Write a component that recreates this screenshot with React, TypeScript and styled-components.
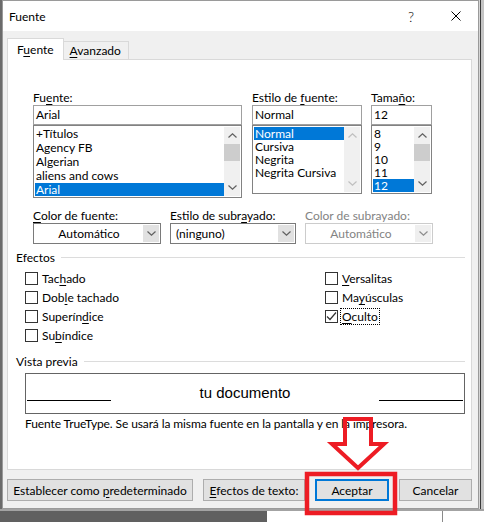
import styled, { createGlobalStyle } from 'styled-components';

const GlobalStyle = createGlobalStyle`
  html, body {
    margin: 0;
    padding: 0;
  }
  body {
    font-family: Lato, "Noto Sans", sans-serif;
    font-size: 12px;
    color: #000;
  }
`;

const fontFaces = ['+Títulos', 'Agency FB', 'Algerian', 'aliens and cows', 'Arial'];
const fontStyles = ['Normal', 'Cursiva', 'Negrita', 'Negrita Cursiva'];
const fontSizes = ['8', '9', '10', '11', '12'];

const Chevron = ({ dir, color }: { dir: 'up' | 'down'; color: string }) => (
  <svg width="9" height="5" viewBox="0 0 9 5">
    <polyline
      points={dir === 'up' ? '0.5,4.5 4.5,0.8 8.5,4.5' : '0.5,0.5 4.5,4.2 8.5,0.5'}
      fill="none"
      stroke={color}
      strokeWidth="1.2"
    />
  </svg>
);

const ScrollBar = ({ enabled }: { enabled: boolean }) => (
  <ScrollTrack>
    <ScrollArrow>
      <Chevron dir="up" color={enabled ? '#606060' : '#bfbfbf'} />
    </ScrollArrow>
    <ScrollRail>{enabled && <ScrollThumb />}</ScrollRail>
    <ScrollArrow>
      <Chevron dir="down" color={enabled ? '#606060' : '#bfbfbf'} />
    </ScrollArrow>
  </ScrollTrack>
);

const App = () => {
  return (
    <Page>
      <GlobalStyle />
      <Dialog>
        <TitleBar>
          <Title>Fuente</Title>
          <TitleButton $width={46}>
            <HelpGlyph>?</HelpGlyph>
          </TitleButton>
          <TitleButton $width={44}>
            <svg width="10" height="10" viewBox="0 0 10 10">
              <path d="M0.5 0.5 L9.5 9.5 M9.5 0.5 L0.5 9.5" stroke="#000" strokeWidth="1" />
            </svg>
          </TitleButton>
        </TitleBar>

        <Body>
          <TabStrip>
            <Tab $active>
              F<Key>u</Key>ente
            </Tab>
            <Tab>
              <Key>A</Key>vanzado
            </Tab>
          </TabStrip>

          <Panel>
            <Pickers>
              <PickerColumn $width={209}>
                <FieldLabel>
                  Fu<Key>e</Key>nte:
                </FieldLabel>
                <TextBox>Arial</TextBox>
                <ListBox $height={73}>
                  <Items>
                    {fontFaces.map((f) => (
                      <Item key={f} $row={14} $selected={f === 'Arial'}>
                        {f}
                      </Item>
                    ))}
                  </Items>
                  <ScrollBar enabled />
                </ListBox>
              </PickerColumn>

              <PickerColumn $width={110}>
                <FieldLabel>
                  Estilo de <Key>f</Key>uente:
                </FieldLabel>
                <TextBox>Normal</TextBox>
                <ListBox $height={69}>
                  <Items>
                    {fontStyles.map((s) => (
                      <Item key={s} $row={13} $selected={s === 'Normal'}>
                        {s}
                      </Item>
                    ))}
                  </Items>
                  <ScrollBar enabled={false} />
                </ListBox>
              </PickerColumn>

              <PickerColumn $width={61}>
                <FieldLabel>
                  Tama<Key>ñ</Key>o:
                </FieldLabel>
                <TextBox>12</TextBox>
                <ListBox $height={69}>
                  <Items>
                    {fontSizes.map((s) => (
                      <Item key={s} $row={13} $selected={s === '12'}>
                        {s}
                      </Item>
                    ))}
                  </Items>
                  <ScrollBar enabled />
                </ListBox>
              </PickerColumn>
            </Pickers>

            <Combos>
              <PickerColumn $width={128}>
                <FieldLabel>
                  <Key>C</Key>olor de fuente:
                </FieldLabel>
                <Combo>
                  <ComboValue $centered>Automático</ComboValue>
                  <ComboButton>
                    <Chevron dir="down" color="#606060" />
                  </ComboButton>
                </Combo>
              </PickerColumn>
              <PickerColumn $width={126}>
                <FieldLabel>
                  Estilo de subr<Key>a</Key>yado:
                </FieldLabel>
                <Combo>
                  <ComboValue>(ninguno)</ComboValue>
                  <ComboButton>
                    <Chevron dir="down" color="#606060" />
                  </ComboButton>
                </Combo>
              </PickerColumn>
              <PickerColumn $width={128}>
                <FieldLabel $disabled>Color de subrayado:</FieldLabel>
                <Combo $disabled>
                  <ComboValue $centered $disabled>
                    Automático
                  </ComboValue>
                  <ComboButton $disabled>
                    <Chevron dir="down" color="#8c8c8c" />
                  </ComboButton>
                </Combo>
              </PickerColumn>
            </Combos>

            <GroupHeading $top={6}>Efectos</GroupHeading>
            <Effects>
              <CheckRow>
                <CheckBox />
                <span>
                  Tac<Key>h</Key>ado
                </span>
              </CheckRow>
              <CheckRow>
                <CheckBox />
                <span>
                  Dob<Key>l</Key>e tachado
                </span>
              </CheckRow>
              <CheckRow>
                <CheckBox />
                <span>
                  Superín<Key>d</Key>ice
                </span>
              </CheckRow>
              <CheckRow>
                <CheckBox />
                <span>
                  Su<Key>b</Key>índice
                </span>
              </CheckRow>
              <CheckRow>
                <CheckBox />
                <span>
                  <Key>V</Key>ersalitas
                </span>
              </CheckRow>
              <CheckRow>
                <CheckBox />
                <span>
                  Ma<Key>y</Key>úsculas
                </span>
              </CheckRow>
              <CheckRow>
                <CheckBox>
                  <svg width="11" height="11" viewBox="0 0 11 11">
                    <polyline points="1,5.5 4,8.5 10,1.5" fill="none" stroke="#333" strokeWidth="1.2" />
                  </svg>
                </CheckBox>
                <Focused>
                  <Key>O</Key>culto
                </Focused>
              </CheckRow>
            </Effects>

            <GroupHeading $top={9}>Vista previa</GroupHeading>
            <PreviewBox>
              <PreviewRule />
              <PreviewText>tu documento</PreviewText>
              <PreviewRule />
            </PreviewBox>
            <Note>Fuente TrueType. Se usará la misma fuente en la pantalla y en la impresora.</Note>
          </Panel>

          <ButtonRow>
            <Button $width={186}>
              <span>
                Establecer como <Key>p</Key>redeterminado
              </span>
            </Button>
            <Button $width={102}>
              <span>
                <Key>E</Key>fectos de texto:
              </span>
            </Button>
            <Button $width={74} $default>
              Aceptar
            </Button>
            <Button $width={73}>Cancelar</Button>
          </ButtonRow>
        </Body>
      </Dialog>

      <RightStrip />
      <BottomStrip>
        <DarkArea />
        <LightArea />
      </BottomStrip>

      <Markup width="484" height="522" viewBox="0 0 484 522">
        <polygon
          points="345,419 371,419 371,444 384,444 358,468 332,444 345,444"
          fill="none"
          stroke="#ed1c24"
          strokeWidth="4"
        />
        <rect x="307" y="474" width="88" height="39" fill="none" stroke="#ed1c24" strokeWidth="4.5" />
      </Markup>
    </Page>
  );
};

const Page = styled.div`
  position: relative;
  width: 484px;
  height: 522px;
  overflow: hidden;
  display: grid;
  grid-template-columns: 479px 1fr;
  grid-template-rows: 509px 1fr;
  background: #6b6b6b;
`;

const Dialog = styled.div`
  margin-left: 2px;
  border: 1px solid #9a9a9a;
  background: #f0f0f0;
  display: flex;
  flex-direction: column;
`;

const TitleBar = styled.div`
  height: 30px;
  background: #fff;
  display: flex;
  align-items: center;
`;

const Title = styled.div`
  flex: 1;
  padding-left: 6px;
  padding-top: 1px;
  font-size: 12px;
`;

const TitleButton = styled.div<{ $width: number }>`
  width: ${(p) => p.$width}px;
  height: 30px;
  display: flex;
  align-items: center;
  justify-content: center;
`;

const HelpGlyph = styled.span`
  font-size: 14px;
  font-weight: 300;
`;

const Body = styled.div`
  flex: 1;
  padding: 7px 6px 7px 4px;
  display: flex;
  flex-direction: column;
`;

const TabStrip = styled.div`
  height: 21px;
  display: flex;
  align-items: flex-end;
`;

const Tab = styled.div<{ $active?: boolean }>`
  box-sizing: border-box;
  height: ${(p) => (p.$active ? 22 : 18)}px;
  margin-bottom: ${(p) => (p.$active ? -1 : 0)}px;
  padding: ${(p) => (p.$active ? '3px 9px 0 9px' : '1px 7px 0 6px')};
  background: ${(p) => (p.$active ? '#fff' : '#f0f0f0')};
  border: 1px solid #d9d9d9;
  border-bottom: none;
  margin-left: ${(p) => (p.$active ? 0 : -1)}px;
  position: relative;
  z-index: ${(p) => (p.$active ? 1 : 0)};
  line-height: 15px;
`;

const Key = styled.span`
  text-decoration: underline;
  text-underline-offset: 2px;
`;

const Panel = styled.div`
  box-sizing: border-box;
  height: 411px;
  background: #fff;
  border: 1px solid #d9d9d9;
  display: flex;
  flex-direction: column;
`;

const Pickers = styled.div`
  margin-top: 30px;
  padding-left: 25px;
  display: flex;
  gap: 10px;
  align-items: flex-start;

  & > div:last-child {
    margin-left: -1px;
  }
`;

const PickerColumn = styled.div<{ $width: number }>`
  width: ${(p) => p.$width}px;
  display: flex;
  flex-direction: column;
`;

const FieldLabel = styled.div<{ $disabled?: boolean }>`
  height: 15px;
  line-height: 15px;
  white-space: nowrap;
  color: ${(p) => (p.$disabled ? '#838383' : '#000')};
`;

const TextBox = styled.div`
  box-sizing: border-box;
  height: 20px;
  border: 1px solid #a0a0a0;
  padding: 0 2px;
  line-height: 18px;
  background: #fff;
`;

const ListBox = styled.div<{ $height: number }>`
  box-sizing: border-box;
  height: ${(p) => p.$height}px;
  border: 1px solid #828282;
  padding: 1px;
  display: flex;
  background: #fff;
`;

const Items = styled.div`
  flex: 1;
  display: flex;
  flex-direction: column;
  overflow: hidden;
`;

const Item = styled.div<{ $row: number; $selected?: boolean }>`
  height: ${(p) => p.$row}px;
  line-height: ${(p) => p.$row}px;
  flex-shrink: 0;
  padding-left: 1px;
  white-space: nowrap;
  background: ${(p) => (p.$selected ? '#0078d7' : 'transparent')};
  color: ${(p) => (p.$selected ? '#fff' : '#000')};
`;

const ScrollTrack = styled.div`
  width: 16px;
  background: #f0f0f0;
  display: flex;
  flex-direction: column;
`;

const ScrollArrow = styled.div`
  height: 17px;
  display: flex;
  align-items: center;
  justify-content: center;
`;

const ScrollRail = styled.div`
  flex: 1;
`;

const ScrollThumb = styled.div`
  height: 17px;
  background: #cdcdcd;
`;

const Combos = styled.div`
  margin-top: 10px;
  padding-left: 25px;
  display: flex;
  gap: 9px;
`;

const Combo = styled.div<{ $disabled?: boolean }>`
  box-sizing: border-box;
  height: 21px;
  border: 1px solid ${(p) => (p.$disabled ? '#cccccc' : '#7a7a7a')};
  background: #fff;
  display: flex;
  padding: 1px;
`;

const ComboValue = styled.div<{ $centered?: boolean; $disabled?: boolean }>`
  flex: 1;
  line-height: 17px;
  padding-left: ${(p) => (p.$centered ? 0 : 4)}px;
  text-align: ${(p) => (p.$centered ? 'center' : 'left')};
  color: ${(p) => (p.$disabled ? '#838383' : '#000')};
`;

const ComboButton = styled.div<{ $disabled?: boolean }>`
  width: 16px;
  background: ${(p) => (p.$disabled ? '#efefef' : '#e1e1e1')};
  display: flex;
  align-items: center;
  justify-content: center;
`;

const GroupHeading = styled.div<{ $top: number }>`
  margin-top: ${(p) => p.$top}px;
  height: 15px;
  line-height: 15px;
  padding: 0 6px 0 8px;
  display: flex;
  align-items: center;
  gap: 6px;

  &::after {
    content: '';
    flex: 1;
    height: 1px;
    background: #dcdcdc;
  }
`;

const Effects = styled.div`
  margin-top: 4px;
  padding-left: 17px;
  display: grid;
  grid-template-columns: 300px 1fr;
  grid-template-rows: repeat(4, 19px);
  grid-auto-flow: column;
`;

const CheckRow = styled.div`
  display: flex;
  align-items: center;
  gap: 4px;
`;

const CheckBox = styled.div`
  box-sizing: border-box;
  width: 13px;
  height: 13px;
  border: 1px solid #333;
  background: #fff;
  display: flex;
  align-items: center;
  justify-content: center;
`;

const Focused = styled.span`
  outline: 1px dotted #000;
  outline-offset: 0;
  padding: 0 1px;
  margin-left: -1px;
`;

const PreviewBox = styled.div`
  box-sizing: border-box;
  margin: 4px 6px 0 17px;
  height: 41px;
  border: 1px solid #646464;
  padding: 0 1px;
  display: flex;
  align-items: flex-start;
`;

const PreviewRule = styled.div`
  width: 84px;
  height: 1px;
  margin-top: 26px;
  background: #000;
`;

const PreviewText = styled.div`
  flex: 1;
  text-align: center;
  font-family: 'Liberation Sans', Arial, sans-serif;
  font-size: 15px;
  line-height: 17px;
  padding-top: 10px;
`;

const Note = styled.div`
  margin-top: 2px;
  padding-left: 17px;
  line-height: 15px;
  white-space: nowrap;
  letter-spacing: -0.1px;
`;

const ButtonRow = styled.div`
  margin-top: 9px;
  display: flex;
  gap: 10px;
`;

const Button = styled.div<{ $width: number; $default?: boolean }>`
  box-sizing: border-box;
  width: ${(p) => p.$width}px;
  height: 22px;
  background: #e1e1e1;
  border: ${(p) => (p.$default ? '2px solid #0078d7' : '1px solid #adadad')};
  display: flex;
  align-items: center;
  justify-content: center;
  white-space: nowrap;
`;

const RightStrip = styled.div`
  background: #c4c4c4;
  border-left: 1px solid #d6d6d6;
  box-shadow: inset 1px 0 0 #3a3a3a;
`;

const BottomStrip = styled.div`
  grid-column: 1 / -1;
  display: flex;
  border-top: 2px solid #a3a3a3;
`;

const DarkArea = styled.div`
  width: 267px;
  background: #606060;
`;

const LightArea = styled.div`
  flex: 1;
  background: #fff;
  background-image: linear-gradient(#8a8a8a, #8a8a8a);
  background-size: 1px 100%;
  background-position: 175px 0;
  background-repeat: no-repeat;
`;

const Markup = styled.svg`
  position: absolute;
  left: 0;
  top: 0;
  pointer-events: none;
`;

export default App;
